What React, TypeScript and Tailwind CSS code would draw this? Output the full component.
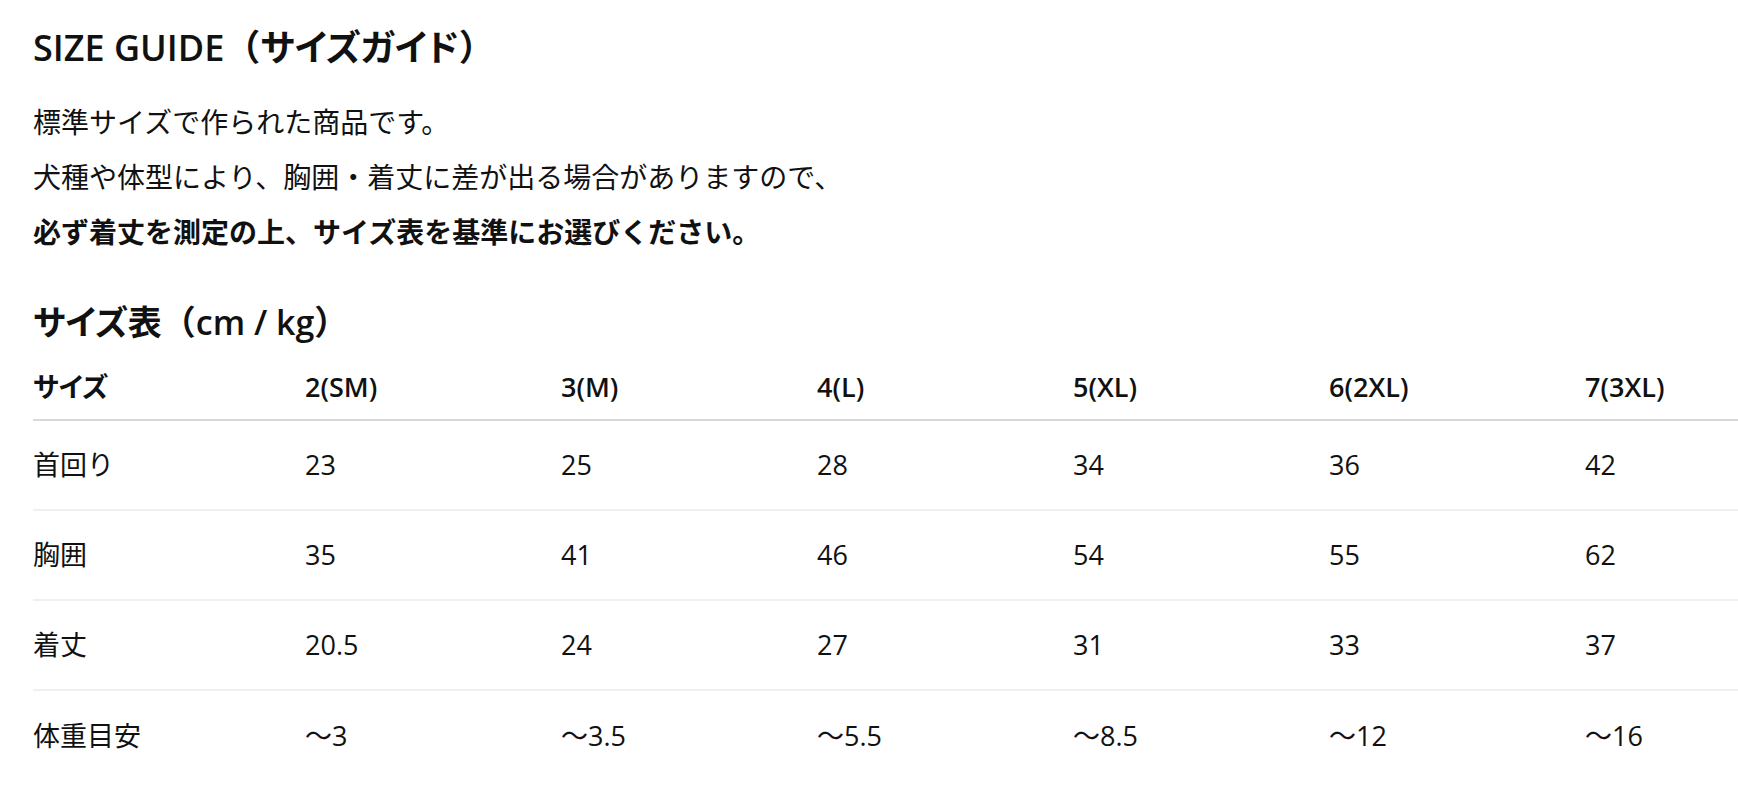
const sizes = ['2(SM)', '3(M)', '4(L)', '5(XL)', '6(2XL)', '7(3XL)'];

const rows = [
  { label: '首回り', values: ['23', '25', '28', '34', '36', '42'] },
  { label: '胸囲', values: ['35', '41', '46', '54', '55', '62'] },
  { label: '着丈', values: ['20.5', '24', '27', '31', '33', '37'] },
  { label: '体重目安', values: ['～3', '～3.5', '～5.5', '～8.5', '～12', '～16'] },
];

const font = "font-['Open_Sans','Noto_Sans_CJK_JP',sans-serif]";

export default function App() {
  return (
    <main className={`min-h-screen w-full overflow-hidden bg-white text-[#111] ${font}`}>
      <div className="pl-[33px]">
        {/* Title */}
        <h1 className="mt-[25px] whitespace-nowrap text-[36px] font-semibold leading-[46px]">
          SIZE GUIDE（<span className="[font-feature-settings:'palt']">サイズガイド</span>）
        </h1>

        {/* Notes */}
        <div className="mt-[24px] whitespace-nowrap text-[28px] leading-[55px]">
          <p>標準サイズで作られた商品です。</p>
          <p>犬種や体型により、胸囲・着丈に差が出る場合がありますので、</p>
          <p className="font-bold">必ず着丈を測定の上、サイズ表を基準にお選びください。</p>
        </div>

        {/* Size table */}
        <h2 className="mt-[40px] whitespace-nowrap text-[34px] font-semibold leading-[44px]">
          <span className="[font-feature-settings:'palt']">サイズ</span>表（cm / kg）
        </h2>

        <div className="w-[1808px] text-[27px]">
          <div className="grid grid-cols-[272px_repeat(6,256px)] border-b-2 border-[#d9d9d9] pt-[25px] pb-[14px] font-semibold leading-[36px]">
            <div className="[font-feature-settings:'palt']">サイズ</div>
            {sizes.map((s) => (
              <div key={s}>{s}</div>
            ))}
          </div>
          {rows.map((row, i) => (
            <div
              key={row.label}
              className={`grid h-[90px] grid-cols-[272px_repeat(6,256px)] items-center ${
                i < rows.length - 1 ? 'border-b-2 border-[#f0f0f0]' : ''
              }`}
            >
              <div>{row.label}</div>
              {row.values.map((v, j) => (
                <div key={j}>{v}</div>
              ))}
            </div>
          ))}
        </div>
      </div>
    </main>
  );
}
